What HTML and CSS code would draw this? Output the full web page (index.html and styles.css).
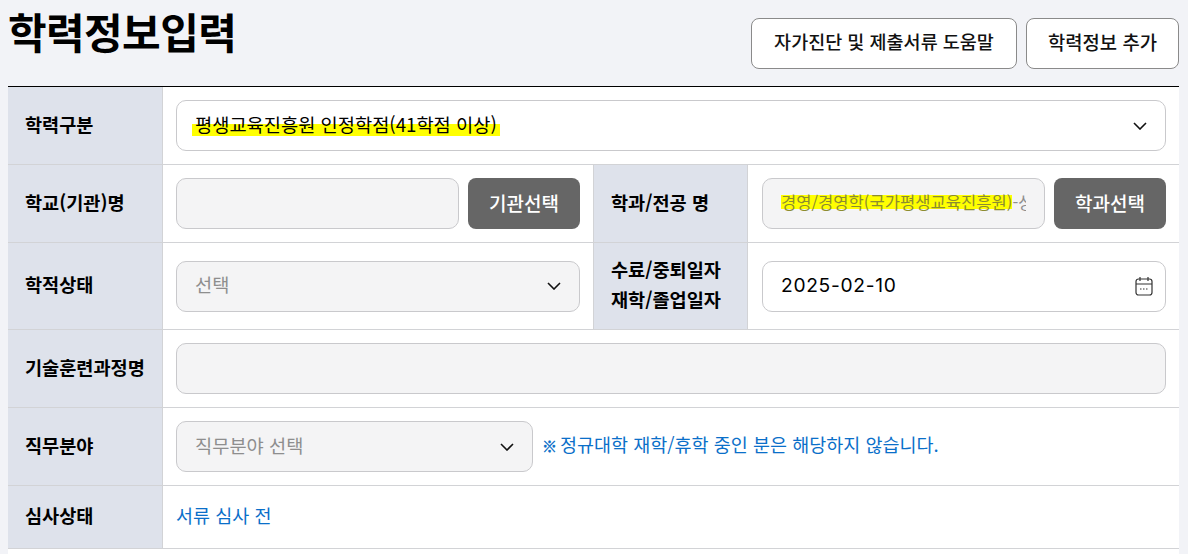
FILE: index.html
```html
<!DOCTYPE html>
<html lang="ko">

<head>
    <meta charset="UTF-8">
    <title>학력정보입력</title>
    <link rel="stylesheet" href="styles.css">
</head>

<body>
    <div class="top">
        <h1>학력정보입력</h1>
        <div class="top-btns">
            <button class="btn-line btn-help">자가진단 및 제출서류 도움말</button>
            <button class="btn-line btn-add">학력정보 추가</button>
        </div>
    </div>

    <div class="form">
        <div class="row row-1">
            <div class="th">학력구분</div>
            <div class="td">
                <div class="field select"><span class="mark">평생교육진흥원 인정학점(41학점 이상)</span>
                    <svg class="arrow" viewBox="0 0 14 8"><path d="M1 1l6 6 6-6" /></svg>
                </div>
            </div>
        </div>
        <div class="row row-2">
            <div class="th">학교(기관)명</div>
            <div class="td half">
                <div class="field off"></div>
                <button class="btn-dark">기관선택</button>
            </div>
            <div class="th th-mid">학과/전공 명</div>
            <div class="td td-right">
                <div class="field off clip"><span class="dim"><span class="mark-full">경영/경영학(국가평생교육진흥원)</span>-상세전공</span></div>
                <button class="btn-dark">학과선택</button>
            </div>
        </div>
        <div class="row row-3">
            <div class="th">학적상태</div>
            <div class="td half">
                <div class="field off select"><span class="gray">선택</span>
                    <svg class="arrow" viewBox="0 0 14 8"><path d="M1 1l6 6 6-6" /></svg>
                </div>
            </div>
            <div class="th th-mid two-line">수료/중퇴일자<br>재학/졸업일자</div>
            <div class="td td-right">
                <div class="field select date">2025-02-10
                    <svg class="cal" viewBox="0 0 18 20">
                        <rect x="1" y="3" width="16" height="16" rx="2.5" />
                        <path d="M1 8h16M5 1v4M13 1v4" />
                        <path class="dots" d="M5 13h8" />
                    </svg>
                </div>
            </div>
        </div>
        <div class="row row-4">
            <div class="th">기술훈련과정명</div>
            <div class="td"><div class="field off"></div></div>
        </div>
        <div class="row row-5">
            <div class="th">직무분야</div>
            <div class="td">
                <div class="field off select job"><span class="gray">직무분야 선택</span>
                    <svg class="arrow" viewBox="0 0 14 8"><path d="M1 1l6 6 6-6" /></svg>
                </div>
                <span class="note"><b class="ref">※</b>정규대학 재학/휴학 중인 분은 해당하지 않습니다.</span>
            </div>
        </div>
        <div class="row row-6">
            <div class="th">심사상태</div>
            <div class="td"><span class="status">서류 심사 전</span></div>
        </div>
    </div>
</body>

</html>
```

FILE: styles.css
```css
* {
    box-sizing: border-box;
}

html,
body {
    height: 100%;
}

body {
    margin: 0;
    padding: 0 9px 0 8px;
    background: #f2f3f7;
    color: #000;
    font-family: "Inter", "Noto Sans CJK KR", sans-serif;
    overflow: hidden;
}

.top {
    display: flex;
    justify-content: space-between;
    height: 86px;
}

h1 {
    margin: 0;
    padding-top: 3px;
    font-size: 42px;
    line-height: 56px;
    font-weight: 700;
    letter-spacing: -0.6px;
    font-family: "Noto Sans CJK KR", sans-serif;
}

.top-btns {
    display: flex;
    gap: 9px;
    padding-top: 18px;
}

button {
    font-family: "Noto Sans CJK KR", sans-serif;
}

.btn-line {
    height: 51px;
    padding: 0 0 5px;
    background: #fff;
    border: 1px solid #8a8a8a;
    border-radius: 8px;
    font-size: 18.5px;
    font-weight: 500;
    color: #111;
    white-space: nowrap;
}

.btn-help {
    width: 266px;
}

.btn-add {
    width: 153px;
    font-size: 18.8px;
}

.form {
    border-top: 1px solid #000;
    background: #fff;
    min-height: 468px;
}

.row {
    display: flex;
    border-bottom: 1px solid #d2d3d6;
}

.row-1,
.row-2,
.row-4,
.row-5 {
    height: 78px;
}

.row-3 {
    height: 87px;
}

.row-6 {
    height: 63px;
}

.th {
    flex: none;
    display: flex;
    align-items: center;
    width: 155px;
    padding: 0 0 5px 17px;
    background: #dee2eb;
    border-right: 1px solid #d2d3d6;
    font-size: 18.6px;
    font-weight: 700;
    font-family: "Noto Sans CJK KR", sans-serif;
    white-space: nowrap;
}

.th-mid {
    border-left: 1px solid #d2d3d6;
}

.two-line {
    line-height: 30px;
}

.td {
    flex: 1;
    min-width: 0;
    display: flex;
    align-items: center;
    gap: 9px;
    padding: 0 13px;
}

.td-right {
    padding-left: 14px;
}

.half {
    flex: none;
    width: 430px;
}

.field {
    flex: 1;
    min-width: 0;
    height: 51px;
    display: flex;
    align-items: center;
    padding: 0 18px 5px;
    background: #fff;
    border: 1px solid #c9c9cc;
    border-radius: 10px;
    font-size: 18.7px;
    font-family: "Noto Sans CJK KR", sans-serif;
}

.off {
    background: #f4f4f5;
}

.select {
    justify-content: space-between;
}

.clip {
    padding-bottom: 3px;
    white-space: nowrap;
    overflow: hidden;
}

.clip .dim {
    display: block;
    min-width: 0;
    overflow: hidden;
    color: #8e8e8e;
    font-size: 16.6px;
}

.mark,
.mark-full {
    background-image: linear-gradient(#ffff00, #ffff00);
    background-repeat: no-repeat;
    white-space: nowrap;
}

.mark {
    margin-left: -3px;
    padding: 0 3px;
    background-position: 0 14px;
    background-size: 100% 12px;
}

.mark-full {
    color: #8c8c30;
    background-position: 0 5px;
    background-size: 100% 14px;
}

.gray {
    color: #8e8e8e;
}

.arrow {
    width: 14px;
    height: 8px;
    margin: 5px 0 0 0;
    fill: none;
    stroke: #111;
    stroke-width: 1.6;
}

.date {
    padding-bottom: 3px;
    font-family: "Inter", sans-serif;
    font-size: 19.2px;
    letter-spacing: 0.7px;
}

.cal {
    width: 18px;
    height: 20px;
    margin: 3px -6px 0 0;
    fill: none;
    stroke: #333;
    stroke-width: 1.2;
}

.cal .dots {
    stroke-dasharray: 1.5 1.5;
}

.job {
    flex: none;
    width: 357px;
}

.btn-dark {
    flex: none;
    width: 112px;
    height: 51px;
    padding-bottom: 3px;
    background: #666;
    border: 0;
    border-radius: 8px;
    color: #fff;
    font-size: 19px;
    font-weight: 500;
}

.note,
.status {
    padding-bottom: 5px;
    color: #0a6fc9;
    font-size: 18.5px;
    font-family: "Noto Sans CJK KR", sans-serif;
    white-space: nowrap;
}

.ref {
    margin-right: 3px;
    font-size: 15px;
    font-weight: 900;
    -webkit-text-stroke: 0.4px #0a6fc9;
}
```
